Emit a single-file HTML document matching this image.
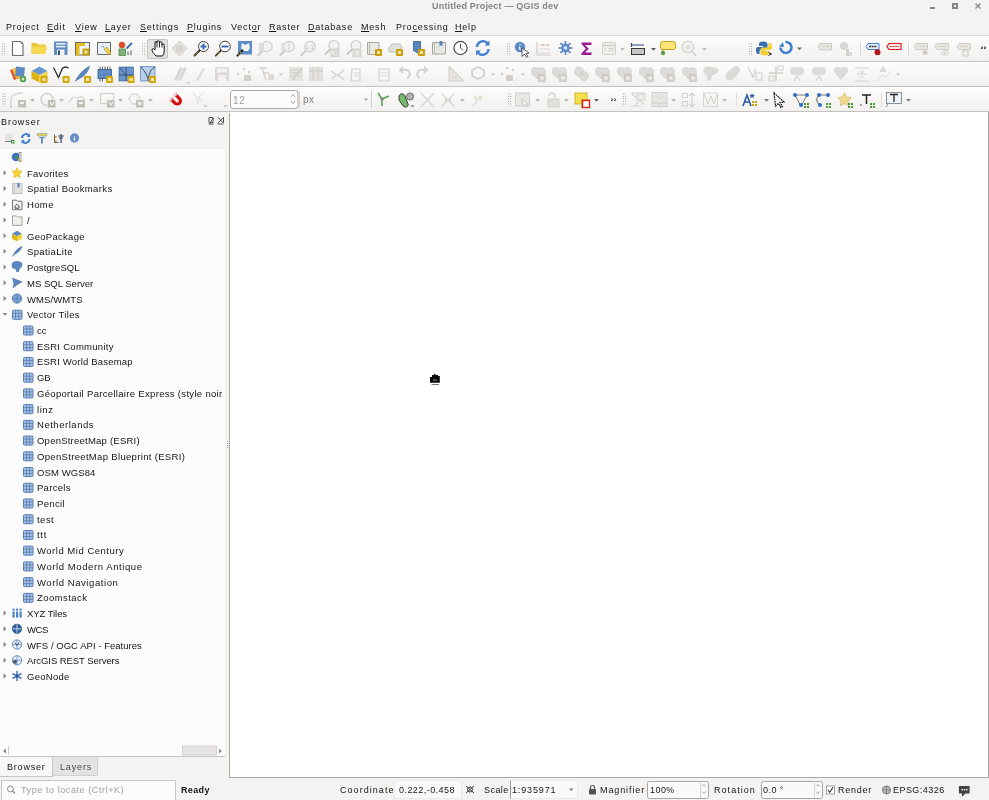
<!DOCTYPE html>
<html><head><meta charset="utf-8">
<style>
*{margin:0;padding:0;box-sizing:border-box}
html,body{width:989px;height:800px;overflow:hidden;background:#f4f3f2;font-family:"Liberation Sans", sans-serif;font-size:9px;letter-spacing:0.45px;color:#151515}
.a{position:absolute;white-space:nowrap}
.t{position:absolute;white-space:nowrap;line-height:12px;will-change:transform}
.u{text-decoration:underline;text-underline-offset:1px}
svg{position:absolute;overflow:visible}
</style></head><body>

<div class="t" style="left:432px;top:0px;font-size:9px;letter-spacing:.2px;font-weight:bold;color:#858585;line-height:13px">Untitled Project — QGIS dev</div>
<div class="a" style="left:930px;top:7px;width:5px;height:2px;background:#858585"></div>
<div class="a" style="left:952px;top:3px;width:6px;height:6px;border:2px solid #858585"></div>
<svg style="left:975px;top:3px" width="6" height="6"><path d="M0.5 0.5L5.5 5.5M5.5 0.5L0.5 5.5" stroke="#858585" stroke-width="1.3"/></svg>
<div class="t" style="left:6.3px;top:21px;letter-spacing:.8px;color:#151515">Pro<span class="u">j</span>ect</div>
<div class="t" style="left:47px;top:21px;letter-spacing:.8px;color:#151515"><span class="u">E</span>dit</div>
<div class="t" style="left:75px;top:21px;letter-spacing:.8px;color:#151515"><span class="u">V</span>iew</div>
<div class="t" style="left:105px;top:21px;letter-spacing:.8px;color:#151515"><span class="u">L</span>ayer</div>
<div class="t" style="left:140px;top:21px;letter-spacing:.8px;color:#151515"><span class="u">S</span>ettings</div>
<div class="t" style="left:187px;top:21px;letter-spacing:.8px;color:#151515"><span class="u">P</span>lugins</div>
<div class="t" style="left:230.5px;top:21px;letter-spacing:.8px;color:#151515">Vect<span class="u">o</span>r</div>
<div class="t" style="left:269px;top:21px;letter-spacing:.8px;color:#151515"><span class="u">R</span>aster</div>
<div class="t" style="left:308px;top:21px;letter-spacing:.8px;color:#151515"><span class="u">D</span>atabase</div>
<div class="t" style="left:361px;top:21px;letter-spacing:.8px;color:#151515"><span class="u">M</span>esh</div>
<div class="t" style="left:396px;top:21px;letter-spacing:.8px;color:#151515">Pro<span class="u">c</span>essing</div>
<div class="t" style="left:455px;top:21px;letter-spacing:.8px;color:#151515"><span class="u">H</span>elp</div>
<div class="a" style="left:0;top:35px;width:989px;height:1px;background:#d9d7d4"></div>
<div class="a" style="left:0;top:36px;width:989px;height:25px;background:linear-gradient(#fdfdfc,#f1f0ef)"></div>
<div class="a" style="left:0;top:61px;width:989px;height:1px;background:#c4c3c1"></div>
<div class="a" style="left:0;top:62px;width:989px;height:24px;background:linear-gradient(#fdfdfc,#f1f0ef)"></div>
<div class="a" style="left:0;top:86px;width:989px;height:1px;background:#c4c3c1"></div>
<div class="a" style="left:0;top:87px;width:989px;height:24px;background:linear-gradient(#fdfdfc,#f1f0ef)"></div>
<div class="a" style="left:0;top:111px;width:989px;height:1px;background:#c4c3c1"></div>
<div class="t" style="left:1px;top:115.5px;letter-spacing:.95px;color:#151515">Browser</div>
<div class="a" style="left:0;top:149px;width:225px;height:607px;background:#fcfcfc"></div>
<div class="t" style="left:26.5px;top:167.73px;font-size:9.5px;letter-spacing:0.267px;color:#151515">Favorites</div>
<div class="t" style="left:26.5px;top:183.45px;font-size:9.5px;letter-spacing:0.371px;color:#151515">Spatial Bookmarks</div>
<div class="t" style="left:26.5px;top:199.18px;font-size:9.5px;letter-spacing:0.357px;color:#151515">Home</div>
<div class="t" style="left:26.5px;top:214.91px;font-size:9.5px;letter-spacing:0.45px;color:#151515">/</div>
<div class="t" style="left:26.5px;top:230.63px;font-size:9.5px;letter-spacing:0.285px;color:#151515">GeoPackage</div>
<div class="t" style="left:26.5px;top:246.36px;font-size:9.5px;letter-spacing:0.369px;color:#151515">SpatiaLite</div>
<div class="t" style="left:26.5px;top:262.09px;font-size:9.5px;letter-spacing:0.092px;color:#151515">PostgreSQL</div>
<div class="t" style="left:26.5px;top:277.82px;font-size:9.5px;letter-spacing:0.01px;color:#151515">MS SQL Server</div>
<div class="t" style="left:26.5px;top:293.54px;font-size:9.5px;letter-spacing:0.094px;color:#151515">WMS/WMTS</div>
<div class="t" style="left:26.5px;top:309.27px;font-size:9.5px;letter-spacing:0.307px;color:#151515">Vector Tiles</div>
<div class="t" style="left:36.5px;top:325.00px;font-size:9.5px;letter-spacing:0.1px;color:#151515">cc</div>
<div class="t" style="left:36.5px;top:340.72px;font-size:9.5px;letter-spacing:0.279px;color:#151515">ESRI Community</div>
<div class="t" style="left:36.5px;top:356.45px;font-size:9.5px;letter-spacing:0.199px;color:#151515">ESRI World Basemap</div>
<div class="t" style="left:36.5px;top:372.18px;font-size:9.5px;letter-spacing:-0.219px;color:#151515">GB</div>
<div class="t" style="left:36.5px;top:387.90px;font-size:9.5px;letter-spacing:0.319px;color:#151515">Géoportail Parcellaire Express (style noir</div>
<div class="t" style="left:36.5px;top:403.63px;font-size:9.5px;letter-spacing:0.55px;color:#151515">linz</div>
<div class="t" style="left:36.5px;top:419.36px;font-size:9.5px;letter-spacing:0.53px;color:#151515">Netherlands</div>
<div class="t" style="left:36.5px;top:435.09px;font-size:9.5px;letter-spacing:0.231px;color:#151515">OpenStreetMap (ESRI)</div>
<div class="t" style="left:36.5px;top:450.81px;font-size:9.5px;letter-spacing:0.327px;color:#151515">OpenStreetMap Blueprint (ESRI)</div>
<div class="t" style="left:36.5px;top:466.54px;font-size:9.5px;letter-spacing:0.096px;color:#151515">OSM WGS84</div>
<div class="t" style="left:36.5px;top:482.27px;font-size:9.5px;letter-spacing:0.288px;color:#151515">Parcels</div>
<div class="t" style="left:36.5px;top:497.99px;font-size:9.5px;letter-spacing:0.338px;color:#151515">Pencil</div>
<div class="t" style="left:36.5px;top:513.72px;font-size:9.5px;letter-spacing:0.484px;color:#151515">test</div>
<div class="t" style="left:36.5px;top:529.45px;font-size:9.5px;letter-spacing:0.697px;color:#151515">ttt</div>
<div class="t" style="left:36.5px;top:545.17px;font-size:9.5px;letter-spacing:0.516px;color:#151515">World Mid Century</div>
<div class="t" style="left:36.5px;top:560.90px;font-size:9.5px;letter-spacing:0.585px;color:#151515">World Modern Antique</div>
<div class="t" style="left:36.5px;top:576.63px;font-size:9.5px;letter-spacing:0.577px;color:#151515">World Navigation</div>
<div class="t" style="left:36.5px;top:592.36px;font-size:9.5px;letter-spacing:0.443px;color:#151515">Zoomstack</div>
<div class="t" style="left:26.5px;top:608.08px;font-size:9.5px;letter-spacing:-0.068px;color:#151515">XYZ Tiles</div>
<div class="t" style="left:26.5px;top:623.81px;font-size:9.5px;letter-spacing:-0.386px;color:#151515">WCS</div>
<div class="t" style="left:26.5px;top:639.54px;font-size:9.5px;letter-spacing:0.037px;color:#151515">WFS / OGC API - Features</div>
<div class="t" style="left:26.5px;top:655.26px;font-size:9.5px;letter-spacing:-0.074px;color:#151515">ArcGIS REST Servers</div>
<div class="t" style="left:26.5px;top:670.99px;font-size:9.5px;letter-spacing:0.276px;color:#151515">GeoNode</div>
<div class="a" style="left:229px;top:112px;width:760px;height:666px;background:#fff;border:1px solid #a9a9a9;border-top:none"></div><div class="a" style="left:229px;top:112px;width:1px;height:1px;background:#f5f4f3"></div>
<div class="a" style="left:0;top:756px;width:225px;height:1px;background:#c8c6c3"></div>
<div class="a" style="left:0;top:757px;width:53px;height:20px;background:#f7f7f6;border-right:1px solid #c8c6c3;border-bottom:1px solid #c8c6c3"></div>
<div class="a" style="left:53px;top:757px;width:45px;height:19px;background:#e4e3e2;border:1px solid #d2d0cd;border-top:none;border-left:none"></div>
<div class="t" style="left:7px;top:760.5px;letter-spacing:.8px;color:#151515">Browser</div>
<div class="t" style="left:60px;top:760.5px;letter-spacing:.85px;color:#4a4a4a">Layers</div>
<div class="a" style="left:1px;top:780px;width:175px;height:21px;background:#fcfcfc;border:1px solid #c9c7c4"></div>
<div class="t" style="left:21px;top:784px;letter-spacing:.58px;color:#a0a0a0">Type to locate (Ctrl+K)</div>
<div class="t" style="left:181px;top:784px;font-weight:bold;font-size:9px;letter-spacing:.35px">Ready</div>
<div class="a" style="left:394px;top:780px;width:68px;height:19px;background:#fafafa;border:1px solid #ebeae8"></div>
<div class="a" style="left:510px;top:780px;width:68px;height:19px;background:#fafafa;border:1px solid #ebeae8;border-left:1px solid #9a9a9a"></div>
<div class="a" style="left:646.5px;top:780.5px;width:62px;height:18px;background:#fafafa;border:1px solid #a8a6a3;border-radius:2.5px"></div>
<div class="a" style="left:699.5px;top:781px;width:1px;height:17px;background:#d6d4d1"></div>
<div class="a" style="left:760.5px;top:780.5px;width:62px;height:18px;background:#fafafa;border:1px solid #a8a6a3;border-radius:2.5px"></div>
<div class="a" style="left:813.5px;top:781px;width:1px;height:17px;background:#d6d4d1"></div>
<div class="t" style="left:340px;top:784px;letter-spacing:1.05px">Coordinate</div>
<div class="t" style="left:399px;top:784px">0.222,-0.458</div>
<div class="t" style="left:484px;top:784px">Scale</div>
<div class="t" style="left:512px;top:784px;letter-spacing:.85px">1:935971</div>
<div class="t" style="left:600px;top:784px;letter-spacing:.9px">Magnifier</div>
<div class="t" style="left:650px;top:784px">100%</div>
<div class="t" style="left:714px;top:784px;letter-spacing:1.05px">Rotation</div>
<div class="t" style="left:763px;top:784px">0.0 °</div>
<div class="t" style="left:838px;top:784px;letter-spacing:.75px">Render</div>
<div class="t" style="left:893px;top:784px">EPSG:4326</div>
<svg style="left:0;top:0" width="989" height="800"><rect x="2" y="43.5" width="1" height="1" fill="#a9a9a9"/><rect x="4" y="43.5" width="1" height="1" fill="#a9a9a9"/><rect x="2" y="46.0" width="1" height="1" fill="#a9a9a9"/><rect x="4" y="46.0" width="1" height="1" fill="#a9a9a9"/><rect x="2" y="48.5" width="1" height="1" fill="#a9a9a9"/><rect x="4" y="48.5" width="1" height="1" fill="#a9a9a9"/><rect x="2" y="51.0" width="1" height="1" fill="#a9a9a9"/><rect x="4" y="51.0" width="1" height="1" fill="#a9a9a9"/><rect x="2" y="53.5" width="1" height="1" fill="#a9a9a9"/><rect x="4" y="53.5" width="1" height="1" fill="#a9a9a9"/><path d="M12.5 41.5h8l2.5 2.5v11.5h-10.5z" fill="#fff" stroke="#6a6a6a" stroke-width="1.1"/><rect x="21" y="42" width="1.2" height="1.2" fill="#555"/><path d="M31.5 43h5l1.5 1.5h7.5v9.5h-14z" fill="#e9c63a"/><path d="M32 46.5h15l-1.5 7.5h-14z" fill="#f7d955"/><rect x="54" y="41.5" width="13.5" height="13.5" rx="1.2" fill="#5f8ac4"/><rect x="56" y="43" width="9.5" height="1.6" fill="#e8eef6"/><rect x="56" y="45.8" width="9.5" height="1.6" fill="#e8eef6"/><rect x="57" y="49.5" width="7.5" height="5.5" fill="#f2f2f2"/><rect x="58" y="50.5" width="2" height="4.5" fill="#2d4d7a"/><rect x="75.5" y="42.5" width="14" height="12.5" fill="#eef5fc" stroke="#6a6a6a" stroke-width="1"/><rect x="76" y="43" width="3.5" height="12.5" fill="#e3bd20"/><rect x="76" y="43" width="9" height="3" fill="#e3bd20"/><rect x="82.5" y="48.5" width="7" height="7" rx="1" fill="#c9a10a"/><rect x="84.5" y="50.5" width="3" height="3" fill="#fff" opacity="0.7"/><rect x="97.5" y="42.5" width="13" height="12" fill="#e6f0fb" stroke="#6a6a6a" stroke-width="1"/><path d="M101 47l2-1 1 2" stroke="#999" stroke-width="0.8" fill="none"/><path d="M104 49l3-2 4 6-2 2z" fill="#f1d04a" stroke="#b8960e" stroke-width="0.6"/><circle cx="122" cy="45" r="3.2" fill="#d9532c"/><path d="M126.5 48.5L132 43" stroke="#3f6fb0" stroke-width="2"/><rect x="119" y="49" width="6.5" height="6.5" fill="#7fb27a" stroke="#4b8a47" stroke-width="0.8"/><path d="M128 51.5v3.5M131 50.5v4.5" stroke="#555" stroke-width="1"/><rect x="142" y="43.5" width="1" height="1" fill="#a9a9a9"/><rect x="144" y="43.5" width="1" height="1" fill="#a9a9a9"/><rect x="142" y="46.0" width="1" height="1" fill="#a9a9a9"/><rect x="144" y="46.0" width="1" height="1" fill="#a9a9a9"/><rect x="142" y="48.5" width="1" height="1" fill="#a9a9a9"/><rect x="144" y="48.5" width="1" height="1" fill="#a9a9a9"/><rect x="142" y="51.0" width="1" height="1" fill="#a9a9a9"/><rect x="144" y="51.0" width="1" height="1" fill="#a9a9a9"/><rect x="142" y="53.5" width="1" height="1" fill="#a9a9a9"/><rect x="144" y="53.5" width="1" height="1" fill="#a9a9a9"/><rect x="147.5" y="39.5" width="20" height="19" rx="1.5" fill="#e3e2e0" stroke="#c4c2bf"/><path d="M156 56L153 52.5Q151 49.5 152.5 48.8Q153.5 48.3 155 50L155 43Q155 41.5 156 41.5Q157 41.5 157 43L157 42Q157 40.8 158.3 40.8Q159.5 40.8 159.5 42L159.5 42.8Q159.5 41.8 160.7 41.8Q162 41.8 162 43L162 45Q162 44 163 44Q164.2 44 164.2 45.3L164.2 51Q164.2 54 162.5 56Z" fill="#fff" stroke="#111" stroke-width="1" stroke-linejoin="round"/><path d="M157 43V47.5M159.5 42.8V47.5M162 45V47.5" stroke="#111" stroke-width="0.9"/><path d="M179.5 41l7.5 7.5-7.5 7.5-7.5-7.5z" fill="#e3e1dd" stroke="#cfccc7" stroke-width="1"/><rect x="176" y="45" width="7" height="7" fill="#d8d5d0"/><path d="M200.0 50.0L194.5 55.5" stroke="#222" stroke-width="1.8" stroke-linecap="round"/><path d="M198.5 51.5L194.5 55.5" stroke="#e8c020" stroke-width="1" stroke-dasharray="1.5 1"/><circle cx="203.5" cy="46.5" r="5" fill="#fff" stroke="#3a3a3a" stroke-width="1.0"/><path d="M200.5 46.5h6M203.5 43.5v6" stroke="#3b6db5" stroke-width="2"/><path d="M221.29 50.21L215.79 55.71" stroke="#222" stroke-width="1.8" stroke-linecap="round"/><path d="M219.79 51.71L215.79 55.71" stroke="#e8c020" stroke-width="1" stroke-dasharray="1.5 1"/><circle cx="225" cy="46.5" r="5.3" fill="#fff" stroke="#3a3a3a" stroke-width="1.0"/><path d="M221.5 46.5h7" stroke="#3b6db5" stroke-width="2"/><rect x="238" y="41" width="14" height="13.5" fill="#5d8dc9"/><path d="M242 43l3 2 4-2 1 5-2 3h-5l-2-3z" fill="#f4f4f4"/><path d="M242.5 50.5L237.5 55.5" stroke="#222" stroke-width="2.2" stroke-linecap="round"/><path d="M241 52L237.5 55.5" stroke="#e8c020" stroke-width="1.1" stroke-dasharray="1.5 1.2"/><path d="M263.36 50.14L258.36 55.14" stroke="#c8c6c2" stroke-width="2" stroke-linecap="round"/><circle cx="267" cy="46.5" r="5.2" fill="#f3f2f0" stroke="#d0cecb" stroke-width="1.2"/><path d="M285.36 50.14L280.36 55.14" stroke="#c8c6c2" stroke-width="2" stroke-linecap="round"/><circle cx="289" cy="46.5" r="5.2" fill="#f3f2f0" stroke="#d0cecb" stroke-width="1.2"/><path d="M306.36 50.14L301.36 55.14" stroke="#c8c6c2" stroke-width="2" stroke-linecap="round"/><circle cx="310" cy="46.5" r="5.2" fill="#f3f2f0" stroke="#d0cecb" stroke-width="1.2"/><rect x="259" y="43" width="5" height="8" fill="#dedcd8"/><rect x="281" y="43" width="4" height="8" fill="#e2e0dc"/><path d="M289 43v7" stroke="#d0cdc8"/><text x="306" y="49" font-size="5" fill="#c0bdb8" font-family="Liberation Sans">1:1</text><path d="M330.5 49.0L325.5 54.0" stroke="#c8c6c2" stroke-width="2" stroke-linecap="round"/><circle cx="334" cy="45.5" r="5" fill="#f3f2f0" stroke="#d0cecb" stroke-width="1.2"/><rect x="331" y="49" width="8" height="7.5" fill="#dedcd8" stroke="#d2cfca" stroke-width="0.8"/><path d="M352.5 49.0L347.5 54.0" stroke="#c8c6c2" stroke-width="2" stroke-linecap="round"/><circle cx="356" cy="45.5" r="5" fill="#f3f2f0" stroke="#d0cecb" stroke-width="1.2"/><rect x="353" y="49" width="8" height="7.5" fill="#dedcd8" stroke="#d2cfca" stroke-width="0.8"/><path d="M334 51l-2 1.8 2 1.8" stroke="#fff" fill="none"/><path d="M356 51l2 1.8-2 1.8" stroke="#fff" fill="none"/><path d="M367.5 42.5h11.5v12h-11.5z" fill="#e9e8e5" stroke="#a9a7a3" stroke-width="1"/><path d="M369.5 42.5v12" stroke="#bdbab5"/><rect x="375" y="49" width="7" height="7" rx="1" fill="#c9a10a"/><rect x="377" y="51" width="3" height="3" fill="#fff" opacity="0.7"/><path d="M388 49l4-5h8l2 3-3 5h-9z" fill="#e2e0dc" stroke="#b5b2ad" stroke-width="0.8"/><rect x="396" y="49" width="7" height="7" rx="1" fill="#c9a10a"/><rect x="398" y="51" width="3" height="3" fill="#fff" opacity="0.7"/><path d="M413.5 41.5h7v14l-3.5-3-3.5-2z" fill="#5a86c0" stroke="#2f5a92" stroke-width="0.8"/><rect x="418" y="49" width="7" height="7" rx="1" fill="#c9a10a"/><rect x="420" y="51" width="3" height="3" fill="#fff" opacity="0.7"/><path d="M432.5 42.5h13v11.5h-13z" fill="#e8e7e4" stroke="#a6a39e" stroke-width="1"/><path d="M434.5 42.5v11.5" stroke="#bbb"/><path d="M439.5 41v5.5l1.5-1.2 1.5 1.2v-5.5z" fill="#5a86c0"/><circle cx="460.5" cy="48" r="6.6" fill="#fdfdfd" stroke="#505050" stroke-width="1.2"/><path d="M460.5 43.5v4.5l2.5 2.5" stroke="#505050" stroke-width="1" fill="none"/><path d="M477 47a6 6 0 0 1 10.5-3.8" stroke="#3f7fd0" stroke-width="2.4" fill="none"/><path d="M489.5 40.5v5h-5z" fill="#3f7fd0"/><path d="M488.5 49a6 6 0 0 1-10.5 3.8" stroke="#3f7fd0" stroke-width="2.4" fill="none"/><path d="M476 55.5v-5h5z" fill="#3f7fd0"/><rect x="507" y="43.5" width="1" height="1" fill="#a9a9a9"/><rect x="509" y="43.5" width="1" height="1" fill="#a9a9a9"/><rect x="507" y="46.0" width="1" height="1" fill="#a9a9a9"/><rect x="509" y="46.0" width="1" height="1" fill="#a9a9a9"/><rect x="507" y="48.5" width="1" height="1" fill="#a9a9a9"/><rect x="509" y="48.5" width="1" height="1" fill="#a9a9a9"/><rect x="507" y="51.0" width="1" height="1" fill="#a9a9a9"/><rect x="509" y="51.0" width="1" height="1" fill="#a9a9a9"/><rect x="507" y="53.5" width="1" height="1" fill="#a9a9a9"/><rect x="509" y="53.5" width="1" height="1" fill="#a9a9a9"/><circle cx="520" cy="47" r="5.2" fill="#5b8ac7"/><path d="M520 44v1M519.5 46.5l.5 3.5" stroke="#fff" stroke-width="1.4"/><path d="M522 48l7 5-3 .5 2 3-1.5.8-2-3-2.5 2z" fill="#fff" stroke="#333" stroke-width="0.8"/><path d="M537 42v13h14" stroke="#d0cec9" stroke-width="1.2" fill="none"/><path d="M539 45h11" stroke="#d6d3ce" stroke-width="1"/><path d="M539 49h11" stroke="#d6d3ce" stroke-width="1"/><path d="M539 53h11" stroke="#d6d3ce" stroke-width="1"/><circle cx="543" cy="45" r="1" fill="#e0b0a0"/><circle cx="548" cy="45" r="1" fill="#e0b0a0"/><g stroke="#4d7fc4" stroke-width="1.6"><path d="M565.5 41v14M558.5 48h14M560.5 43l10 10M570.5 43l-10 10"/></g><circle cx="565.5" cy="48" r="3.8" fill="#6c97d2" stroke="#4d7fc4"/><circle cx="565.5" cy="48" r="1.4" fill="#fff"/><path d="M581.5 42.5h10v2.5h-6.5l3.8 3.8-3.8 3.6h6.5v2.5h-10v-1.6l4.3-4.5-4.3-4.7z" fill="#9b1c96"/><rect x="602.5" y="42.5" width="13" height="12" rx="1" fill="#f0efec" stroke="#d2d0cb"/><path d="M602.5 45.5h13" stroke="#d2d0cb" stroke-width="1.5"/><path d="M604 48.5h2M608 48.5h6" stroke="#d7d4cf"/><path d="M604 51h2M608 51h6" stroke="#d7d4cf"/><path d="M620 48h5l-2.5 2.75z" fill="#c0beba"/><path d="M631 45h13M631.5 43v4" stroke="#2a4a78" stroke-width="1.2"/><rect x="631.5" y="48.5" width="13" height="6" fill="#c6c6c6" stroke="#3a3a3a" stroke-width="1"/><path d="M651 48h5l-2.5 2.75z" fill="#5a5a5a"/><rect x="660.5" y="41.5" width="15" height="8" rx="2.5" fill="#fbe57a" stroke="#c9a211" stroke-width="1"/><path d="M662 49l1 2" stroke="#c9a211"/><circle cx="663" cy="53" r="2.2" fill="#5d9d45"/><circle cx="688" cy="47" r="5.5" fill="none" stroke="#d3d0cb" stroke-width="2" stroke-dasharray="2 1"/><circle cx="688" cy="47" r="2.5" fill="#e2e0dc"/><path d="M692 51l4 5" stroke="#d3d0cb" stroke-width="1.5"/><path d="M702 48h5l-2.5 2.75z" fill="#c0beba"/><rect x="749" y="43.5" width="1" height="1" fill="#a9a9a9"/><rect x="751" y="43.5" width="1" height="1" fill="#a9a9a9"/><rect x="749" y="46.0" width="1" height="1" fill="#a9a9a9"/><rect x="751" y="46.0" width="1" height="1" fill="#a9a9a9"/><rect x="749" y="48.5" width="1" height="1" fill="#a9a9a9"/><rect x="751" y="48.5" width="1" height="1" fill="#a9a9a9"/><rect x="749" y="51.0" width="1" height="1" fill="#a9a9a9"/><rect x="751" y="51.0" width="1" height="1" fill="#a9a9a9"/><rect x="749" y="53.5" width="1" height="1" fill="#a9a9a9"/><rect x="751" y="53.5" width="1" height="1" fill="#a9a9a9"/><g transform="translate(1.5 0)"><path d="M763 42c-4 0-5.5 1-5.5 3v3h5.5v1h-6c-1 0-2 1-2 3.5" fill="none"/><path d="M761.5 41.5c-3 0-4 1-4 2.5v2h4v1h-5c-1.5 0-2 1.5-2 3.5s.8 3.5 2 3.5h1.5v-2.5c0-1.2 1-2 2-2h4c1 0 2-.8 2-2v-3.5c0-1.5-1.5-2.5-4.5-2.5z" fill="#3a6fb0"/><path d="M763.5 55.5c3 0 4-1 4-2.5v-2h-4v-1h5c1.5 0 2-1.5 2-3.5s-.8-3.5-2-3.5h-1.5v2.5c0 1.2-1 2-2 2h-4c-1 0-2 .8-2 2v3.5c0 1.5 1.5 2.5 4.5 2.5z" fill="#f5cf3a"/><path d="M767 52.5l3 1.5-3 1.5" stroke="#222" stroke-width="1" fill="none"/></g><path d="M780.5 47.5a5.5 5.5 0 1 0 5-5.5" stroke="#3f7fd0" stroke-width="2.6" fill="none"/><path d="M779 46.5l4-4.5 1 5z" fill="#3f7fd0"/><path d="M797 47.5h5l-2.5 2.75z" fill="#6a6a6a"/><path d="M820 43.5h11.5v6.5h-11.5l-2-3.2z" fill="#e9e7e3" stroke="#cfccc6" stroke-width="1"/><path d="M822 46.5h8" stroke="#d9d4c0" stroke-width="1.5"/><circle cx="844" cy="46" r="4" fill="#d9d7d3"/><rect x="846" y="49" width="3" height="7" fill="#d2d0cb"/><rect x="849" y="52" width="3" height="4" fill="#dcdad5"/><rect x="860" y="43" width="1" height="12" fill="#d6d4d0"/><path d="M868 43.5h11v6h-11l-2-3z" fill="#e8f0fb" stroke="#3f7fd0" stroke-width="1"/><path d="M869 46.5h8" stroke="#333" stroke-width="1.5" stroke-dasharray="2 .6"/><circle cx="877.5" cy="52.2" r="3" fill="#b3171d"/><path d="M889 43.5h12v6h-12l-2-3z" fill="#fbeaea" stroke="#e0191e" stroke-width="1.2"/><path d="M890 46.5h9" stroke="#d33" stroke-width="1.2" stroke-dasharray="2 .6"/><rect x="908" y="43" width="1" height="12" fill="#d6d4d0"/><path d="M916 43.5h11.5v6h-11.5l-2-3z" fill="#e9e7e3" stroke="#cfccc6" stroke-width="1"/><path d="M917 46.5h8" stroke="#dbd6c0" stroke-width="1.3"/><path d="M937 43.5h11.5v6h-11.5l-2-3z" fill="#e9e7e3" stroke="#cfccc6" stroke-width="1"/><path d="M938 46.5h8" stroke="#dbd6c0" stroke-width="1.3"/><path d="M959 43.5h11.5v6h-11.5l-2-3z" fill="#e9e7e3" stroke="#cfccc6" stroke-width="1"/><path d="M960 46.5h8" stroke="#dbd6c0" stroke-width="1.3"/><circle cx="925" cy="52.5" r="2.5" fill="#d0cdc8"/><ellipse cx="945" cy="53" rx="3.5" ry="2.2" fill="none" stroke="#d0cdc8"/><circle cx="945" cy="53" r="1" fill="#cfccc7"/><path d="M963 51h5v5h-5z" fill="none" stroke="#d0cdc8" stroke-width="1.2"/><path d="M981 46.8l2 1-2 1M984 46.8l2 1-2 1" stroke="#333" stroke-width="1" fill="none"/><path d="M10 70l6-2 4 10-6 2z" fill="#e24b2b"/><path d="M12 69l6-2 4 10-6 2z" fill="#f2c230"/><path d="M16 66.5l9 1-1 9.5-9-1z" fill="#5f8ac4"/><circle cx="23" cy="79" r="3.2" fill="#4ea04a"/><path d="M23 77.5v3M21.5 79h3" stroke="#fff" stroke-width="1"/><path d="M31.5 71l8-4.5 8 4.5-8 4z" fill="#6b97cf"/><path d="M31.5 71v7.5l8 4v-7.5z" fill="#e0b413"/><path d="M39.5 75.5v7l8-4v-7.5z" fill="#f3d34a"/><rect x="40.5" y="76" width="7" height="7" rx="1" fill="#d3a90e"/><rect x="42.5" y="78" width="3" height="3" fill="#fff" opacity="0.7"/><path d="M53.5 67.5l5 10 4-9.5 3-1 3 .8" stroke="#222" stroke-width="1.2" fill="none"/><rect x="62.5" y="76" width="7" height="7" rx="1" fill="#d3a90e"/><rect x="64.5" y="78" width="3" height="3" fill="#fff" opacity="0.7"/><path d="M75.5 81c3-6 8-12 14-14.5-1 4-4 9-10 12z" fill="#5b88c2" stroke="#3b6197" stroke-width="0.6"/><rect x="84" y="76" width="7" height="7" rx="1" fill="#d3a90e"/><rect x="86" y="78" width="3" height="3" fill="#fff" opacity="0.7"/><rect x="98" y="69.5" width="13.5" height="9" fill="#5f8ac4" stroke="#2f5a92" stroke-width="0.8"/><path d="M100 66.5v3M102.5 66.5v3M105 66.5v3M107.5 66.5v3M110 66.5v3M100 78.5v3M102.5 78.5v3" stroke="#333" stroke-width="0.8"/><rect x="106" y="76" width="7" height="7" rx="1" fill="#d3a90e"/><rect x="108" y="78" width="3" height="3" fill="#fff" opacity="0.7"/><rect x="119" y="67" width="14.5" height="14" fill="#6a95cc" stroke="#2f5a92" stroke-width="0.6"/><path d="M126 67v14M119 75h14M120 68l6 7" stroke="#234" stroke-width="0.7"/><rect x="127.5" y="76" width="7" height="7" rx="1" fill="#d3a90e"/><rect x="129.5" y="78" width="3" height="3" fill="#fff" opacity="0.7"/><rect x="140.5" y="66.5" width="14.5" height="14.5" fill="#b9cfe9" stroke="#5f8ac4" stroke-width="0.8"/><path d="M141 67l4 5 3 6 3-8 4-3M148 78v3" stroke="#234" stroke-width="0.8" fill="none"/><rect x="149" y="76" width="7" height="7" rx="1" fill="#d3a90e"/><rect x="151" y="78" width="3" height="3" fill="#fff" opacity="0.7"/><path d="M174 80l6-13 3 1-6 13zM178 80l6-13 3 1-6 13z" fill="#d9d7d3"/><path d="M187 83h3" stroke="#c0beba"/><path d="M196 80l7-12 2 1-7 12z" fill="#dcdad6"/><rect x="215" y="67" width="14" height="14" rx="1" fill="#dcdad6"/><rect x="217" y="68.5" width="10" height="4" fill="#f3f2f0"/><rect x="218" y="75" width="8" height="6" fill="#f3f2f0"/><g fill="#d3d0cb"><circle cx="238" cy="74" r="1.2"/><circle cx="244" cy="69" r="1.2"/><circle cx="249" cy="72" r="1.2"/><rect x="244" y="75" width="7" height="6"/></g><path d="M259 68h8M262 68l4 12M263 73h6" stroke="#d3d0cb" stroke-width="1.4"/><rect x="268" y="74" width="6" height="6" fill="#dedbd6"/><path d="M279 73.5h4l-2.0 2.2z" fill="#c3c1bd"/><rect x="289" y="67" width="14" height="14" fill="#e6e4e0"/><path d="M290 70h12M290 73h12M290 76h12" stroke="#d0ccc0"/><path d="M293 80l9-12" stroke="#cfcbc5" stroke-width="1.3"/><rect x="309" y="67" width="14" height="14" fill="#e3e1dd"/><path d="M309 71h14M313 67v14M318 67v14" stroke="#cfccc7"/><path d="M331 71l6 4-6 4M344 70l-6 5 6 5" stroke="#d2cfca" stroke-width="1.2" fill="none"/><path d="M352 69h8v12h-9z" fill="none" stroke="#d2cfca" stroke-width="1.2"/><path d="M354 73h5M354 76h5" stroke="#d6d3ce"/><path d="M379 69h10v12h-10z" fill="none" stroke="#d2cfca" stroke-width="1.2"/><path d="M381 73h6M381 76h6" stroke="#d6d3ce"/><path d="M407 78a4 4 0 1 0-3-8h-3M403 67l-3 3 3 3" stroke="#d3d0cb" stroke-width="1.8" fill="none"/><path d="M420 78a4 4 0 1 1 3-8h3M424 67l3 3-3 3" stroke="#d3d0cb" stroke-width="1.8" fill="none"/><path d="M449 66v15h15z" fill="#e6e4e0" stroke="#cfccc7" stroke-width="1"/><path d="M452 77h5" stroke="#e0c0b8"/><path d="M478 67l6 3v6l-6 3-6-3v-6z" fill="none" stroke="#d6d3ce" stroke-width="1.8"/><path d="M491 73.5h4l-2.0 2.2z" fill="#c3c1bd"/><g fill="#d3d0cb"><circle cx="502" cy="74" r="1.3"/><circle cx="507" cy="68" r="1.3"/><circle cx="513" cy="70" r="1.3"/><rect x="506" y="75" width="7" height="6"/></g><path d="M521 73.5h4l-2.0 2.2z" fill="#c3c1bd"/><path d="M531.5 70.5c0-3 3-3.5 5.5-2.5s5.5-1.5 7.5 1 .5 5-1.5 6.5l-1 3h-5.5l-1-2.5c-2.5 0-4-1.5-4-5.5z" fill="#dddbd7" stroke="#cfccc7" stroke-width="0.7"/><rect x="538.5" y="74.5" width="7" height="7" fill="#d3d0ca" stroke="#c4c1bb" stroke-width="0.6"/><rect x="540.5" y="76.5" width="3" height="3" fill="#f2f1ef"/><path d="M552.5 70.5c0-3 3-3.5 5.5-2.5s5.5-1.5 7.5 1 .5 5-1.5 6.5l-1 3h-5.5l-1-2.5c-2.5 0-4-1.5-4-5.5z" fill="#dddbd7" stroke="#cfccc7" stroke-width="0.7"/><rect x="559.5" y="74.5" width="7" height="7" fill="#d3d0ca" stroke="#c4c1bb" stroke-width="0.6"/><rect x="561.5" y="76.5" width="3" height="3" fill="#f2f1ef"/><path d="M595.5 70.5c0-3 3-3.5 5.5-2.5s5.5-1.5 7.5 1 .5 5-1.5 6.5l-1 3h-5.5l-1-2.5c-2.5 0-4-1.5-4-5.5z" fill="#dddbd7" stroke="#cfccc7" stroke-width="0.7"/><rect x="602.5" y="74.5" width="7" height="7" fill="#d3d0ca" stroke="#c4c1bb" stroke-width="0.6"/><rect x="604.5" y="76.5" width="3" height="3" fill="#f2f1ef"/><path d="M617.5 70.5c0-3 3-3.5 5.5-2.5s5.5-1.5 7.5 1 .5 5-1.5 6.5l-1 3h-5.5l-1-2.5c-2.5 0-4-1.5-4-5.5z" fill="#dddbd7" stroke="#cfccc7" stroke-width="0.7"/><rect x="624.5" y="74.5" width="7" height="7" fill="#d3d0ca" stroke="#c4c1bb" stroke-width="0.6"/><rect x="626.5" y="76.5" width="3" height="3" fill="#f2f1ef"/><path d="M639.5 70.5c0-3 3-3.5 5.5-2.5s5.5-1.5 7.5 1 .5 5-1.5 6.5l-1 3h-5.5l-1-2.5c-2.5 0-4-1.5-4-5.5z" fill="#dddbd7" stroke="#cfccc7" stroke-width="0.7"/><rect x="646.5" y="74.5" width="7" height="7" fill="#d3d0ca" stroke="#c4c1bb" stroke-width="0.6"/><rect x="648.5" y="76.5" width="3" height="3" fill="#f2f1ef"/><path d="M660.5 70.5c0-3 3-3.5 5.5-2.5s5.5-1.5 7.5 1 .5 5-1.5 6.5l-1 3h-5.5l-1-2.5c-2.5 0-4-1.5-4-5.5z" fill="#dddbd7" stroke="#cfccc7" stroke-width="0.7"/><rect x="667.5" y="74.5" width="7" height="7" fill="#d3d0ca" stroke="#c4c1bb" stroke-width="0.6"/><rect x="669.5" y="76.5" width="3" height="3" fill="#f2f1ef"/><path d="M682.5 70.5c0-3 3-3.5 5.5-2.5s5.5-1.5 7.5 1 .5 5-1.5 6.5l-1 3h-5.5l-1-2.5c-2.5 0-4-1.5-4-5.5z" fill="#dddbd7" stroke="#cfccc7" stroke-width="0.7"/><rect x="689.5" y="74.5" width="7" height="7" fill="#d3d0ca" stroke="#c4c1bb" stroke-width="0.6"/><rect x="691.5" y="76.5" width="3" height="3" fill="#f2f1ef"/><circle cx="579" cy="71.5" r="4.5" fill="#dddbd7" stroke="#cfccc7" stroke-width="0.7"/><circle cx="584" cy="76" r="4.5" fill="#dddbd7" stroke="#cfccc7" stroke-width="0.7"/><path d="M580 73l3 2" stroke="#c8c5c0"/><path d="M704 70c0-3 4-3.5 7-2.5s6 0 6.5 2.5-2.5 4.5-5.5 4.5l-2 5.5c-1.5 1-3-.5-2.5-2l.5-3c-3 0-4-2-4-5z" fill="#dddbd7" stroke="#cfccc7" stroke-width="0.7"/><path d="M727 79c-2-2-1-5 2-8l5-3.5c3-2 6 0 5.5 3l-3 5c-3 3-7 5.5-9.5 3.5z" fill="#dddbd7" stroke="#cfccc7" stroke-width="0.7"/><path d="M748 67l5 10 3-8" stroke="#d6d3ce" stroke-width="1.3" fill="none"/><rect x="756" y="73" width="6" height="7" fill="none" stroke="#d0cdc8"/><path d="M776 66v15M769 73h14" stroke="#d3d0cb" stroke-width="1.5"/><rect x="778" y="66" width="5" height="4" fill="none" stroke="#d3d0cb"/><rect x="769" y="76" width="5" height="5" fill="none" stroke="#d3d0cb"/><circle cx="794" cy="71" r="4" fill="#dcdad6"/><circle cx="800" cy="71" r="4" fill="#dcdad6"/><path d="M794 81l3-6 3 6" stroke="#cfccc7" fill="none"/><circle cx="816" cy="71" r="4" fill="#dcdad6"/><circle cx="822" cy="71" r="4" fill="#dcdad6"/><path d="M816 81l3-6 3 6" stroke="#cfccc7" fill="none"/><path d="M834 70c0-4 6-4 7-1 1-3 7-3 7 1s-4 6-7 10c-3-4-7-6-7-10z" fill="#dcdad6"/><path d="M855 68h14M855 81h14M857 74h10M860 71l2 2 2-2M860 78l2-2 2 2" stroke="#d3d0cb" stroke-width="1" fill="none"/><path d="M877 81l6-6 3 2 5-6" stroke="#d6d3ce" fill="none"/><path d="M883 66l4 6h-8z" fill="#dcdad6"/><path d="M896 73.5h4l-2.0 2.2z" fill="#c3c1bd"/><rect x="2.5" y="93.5" width="1" height="1" fill="#a9a9a9"/><rect x="4.5" y="93.5" width="1" height="1" fill="#a9a9a9"/><rect x="2.5" y="96.0" width="1" height="1" fill="#a9a9a9"/><rect x="4.5" y="96.0" width="1" height="1" fill="#a9a9a9"/><rect x="2.5" y="98.5" width="1" height="1" fill="#a9a9a9"/><rect x="4.5" y="98.5" width="1" height="1" fill="#a9a9a9"/><rect x="2.5" y="101.0" width="1" height="1" fill="#a9a9a9"/><rect x="4.5" y="101.0" width="1" height="1" fill="#a9a9a9"/><rect x="2.5" y="103.5" width="1" height="1" fill="#a9a9a9"/><rect x="4.5" y="103.5" width="1" height="1" fill="#a9a9a9"/><path d="M11 107v-8c0-3 4-6 12-6" stroke="#dad8d4" stroke-width="1.4" fill="none"/><circle cx="11" cy="107" r="1.2" fill="#d3d0cb"/><rect x="18" y="100" width="8" height="7.5" fill="#c3bfb8"/><rect x="20" y="102" width="4" height="2" fill="#f1f0ee"/><path d="M30 99h5l-2.5 2.75z" fill="#b9b6b1"/><circle cx="47" cy="99.5" r="6" fill="none" stroke="#d9d7d3" stroke-width="1.8"/><rect x="48" y="100" width="7.5" height="7.5" fill="#c3bfb8"/><path d="M50 102l2 3 2-3" stroke="#fff" fill="none"/><path d="M59 99h5l-2.5 2.75z" fill="#b9b6b1"/><path d="M70 102c0-4 5-6 8-4 3-3 7 0 6 4" stroke="#dad8d4" stroke-width="1.4" fill="none"/><rect x="77" y="100" width="8" height="7.5" fill="#c3bfb8"/><rect x="79" y="102" width="4" height="2" fill="#f1f0ee"/><path d="M89 99h5l-2.5 2.75z" fill="#b9b6b1"/><rect x="100.5" y="93.5" width="13" height="10" fill="none" stroke="#d6d3cf" stroke-width="1.3"/><rect x="107" y="100" width="7.5" height="7.5" fill="#c3bfb8"/><path d="M109 102l2 3 2-3" stroke="#fff" fill="none"/><path d="M118 99h5l-2.5 2.75z" fill="#b9b6b1"/><path d="M129 99l3-5h5l3 5-3 5h-5z" fill="none" stroke="#d9d7d3" stroke-width="1.4"/><rect x="136" y="100" width="7.5" height="7.5" fill="#c3bfb8"/><rect x="138" y="102" width="3.5" height="3" fill="#f1f0ee"/><path d="M148 99h5l-2.5 2.75z" fill="#b9b6b1"/><g transform="translate(177.2 100.8) rotate(-45)"><path d="M-3.2 -5.5V0a3.2 3.2 0 0 0 6.4 0V-5.5" stroke="#d40f14" stroke-width="3.2" fill="none"/><rect x="-4.8" y="-6" width="3.2" height="1.8" fill="#fff" stroke="#d40f14" stroke-width="0.5"/><rect x="1.6" y="-6" width="3.2" height="1.8" fill="#fff" stroke="#d40f14" stroke-width="0.5"/></g><path d="M193 93l5 6v6M203 93l-5 6M198 99l5 2" stroke="#e2e0dc" stroke-width="1.8" fill="none" stroke-dasharray="1.5 .7"/><path d="M204 106h3M224 106h3" stroke="#a9a6a1" stroke-width="0.9"/><rect x="230.5" y="90.5" width="67.5" height="18" rx="2.5" fill="#fbfbfb" stroke="#acaaa7" stroke-width="1"/><path d="M291 97l2-2.5 2 2.5M291 101l2 2.5 2-2.5" stroke="#9a9a9a" stroke-width="0.9" fill="none"/><path d="M299.5 91v17M371.5 91v17" stroke="#d3d1cd" stroke-width="1"/><path d="M364 98.5h4l-2.0 2.2z" fill="#a0a0a0"/><path d="M382 106v-7M382 99l-4-6M382 99l7-3" stroke="#5aa552" stroke-width="1.6" fill="none"/><circle cx="382" cy="99" r="1.8" fill="#8a8a8a"/><path d="M399 96c1-3 5-3 6 0l3 8c1 3-3 4-5 2l-4-6z" fill="#76b56d" stroke="#333" stroke-width="0.9"/><circle cx="410" cy="96.5" r="3.6" fill="#b3b3b3" stroke="#444" stroke-width="0.7"/><path d="M411 106h3" stroke="#555" stroke-width="1"/><path d="M421 93l13 14M434 93l-13 14" stroke="#dad8d4" stroke-width="1.5"/><path d="M442 94l6 6 6-6M442 106l6-6 6 6" stroke="#d9d6d1" stroke-width="1.5" fill="none"/><path d="M445 98l3 2 3-2v4l-3-2-3 2z" fill="#d8d5cf"/><path d="M460 99h5l-2.5 2.75z" fill="#b9b6b1"/><path d="M472 106l5-4-2-5 5 3 3-5" stroke="#dedcd8" stroke-width="1.4" fill="none"/><circle cx="480" cy="97" r="1" fill="#e7d98c"/><rect x="508" y="93.5" width="1" height="1" fill="#a9a9a9"/><rect x="510" y="93.5" width="1" height="1" fill="#a9a9a9"/><rect x="508" y="96.0" width="1" height="1" fill="#a9a9a9"/><rect x="510" y="96.0" width="1" height="1" fill="#a9a9a9"/><rect x="508" y="98.5" width="1" height="1" fill="#a9a9a9"/><rect x="510" y="98.5" width="1" height="1" fill="#a9a9a9"/><rect x="508" y="101.0" width="1" height="1" fill="#a9a9a9"/><rect x="510" y="101.0" width="1" height="1" fill="#a9a9a9"/><rect x="508" y="103.5" width="1" height="1" fill="#a9a9a9"/><rect x="510" y="103.5" width="1" height="1" fill="#a9a9a9"/><rect x="515.5" y="93" width="14" height="13" fill="#e9e7e3" stroke="#d2cfca"/><path d="M522 99l6 5-2 .5 1.5 2-1 .5-1.5-2-2 1.5z" fill="#f4f3f1" stroke="#c9c6c1" stroke-width="0.8"/><path d="M535 99h5l-2.5 2.75z" fill="#b9b6b1"/><path d="M549 96a3 3 0 1 1 6 0v2" stroke="#d5d2cd" stroke-width="1.3" fill="none"/><rect x="548" y="99" width="11" height="8" fill="#e3e0db" stroke="#d0cdc8" stroke-width="0.8"/><path d="M564 99h5l-2.5 2.75z" fill="#b9b6b1"/><rect x="575" y="93" width="12" height="11" fill="#f4e04f" stroke="#c7a812" stroke-width="0.8"/><rect x="581.5" y="99.5" width="8" height="8" fill="#f4e04f" stroke="#c7a812" stroke-width="0.8"/><rect x="582.5" y="100.5" width="7" height="7" fill="#fff" stroke="#dd2020" stroke-width="1.4"/><path d="M594 99h5l-2.5 2.75z" fill="#606060"/><path d="M611 98.5l2 1.2-2 1.2M614 98.5l2 1.2-2 1.2" stroke="#333" stroke-width="0.9" fill="none"/><rect x="623" y="93.5" width="1" height="1" fill="#a9a9a9"/><rect x="625" y="93.5" width="1" height="1" fill="#a9a9a9"/><rect x="623" y="96.0" width="1" height="1" fill="#a9a9a9"/><rect x="625" y="96.0" width="1" height="1" fill="#a9a9a9"/><rect x="623" y="98.5" width="1" height="1" fill="#a9a9a9"/><rect x="625" y="98.5" width="1" height="1" fill="#a9a9a9"/><rect x="623" y="101.0" width="1" height="1" fill="#a9a9a9"/><rect x="625" y="101.0" width="1" height="1" fill="#a9a9a9"/><rect x="623" y="103.5" width="1" height="1" fill="#a9a9a9"/><rect x="625" y="103.5" width="1" height="1" fill="#a9a9a9"/><path d="M631 93h14M631 106h10M632 94l12 10M644 94l-9 12" stroke="#d6d3ce" stroke-width="1.2" fill="none"/><rect x="637" y="94" width="8" height="6" fill="#ecebe8" stroke="#d6d3ce"/><rect x="652" y="92.5" width="15" height="14" fill="#e8e6e2" stroke="#d3d0cb"/><path d="M652 103h15M659 103v4" stroke="#cfccc7"/><path d="M656 96l4 3 4-3" stroke="#d8d5cf" fill="none"/><path d="M671 99h5l-2.5 2.75z" fill="#b9b6b1"/><rect x="682.5" y="93.5" width="5" height="4" fill="none" stroke="#d3d0cb"/><rect x="682.5" y="101.5" width="5" height="4.5" fill="none" stroke="#d3d0cb"/><path d="M692 93v14M689 96l3-3 3 3M689 104l3 3 3-3" stroke="#d3d0cb" stroke-width="1.2" fill="none"/><rect x="703.5" y="93" width="14" height="13.5" fill="none" stroke="#d9d6d1"/><path d="M704 94l4 10 3-8 3 8 3-10" stroke="#d3d0cb" fill="none"/><path d="M722 99h5l-2.5 2.75z" fill="#b9b6b1"/><rect x="736" y="93" width="1" height="13" fill="#dedcd8"/><path d="M743 106l4-11 4 11M745 102h5" stroke="#2c5aa0" stroke-width="1.6" fill="none"/><path d="M752 93l1 2h2l-1.5 1.3.6 2-2-1.2-2 1.2.6-2-1.5-1.3h2z" fill="#2c5aa0"/><g fill="#c9a10a"><rect x="752" y="101" width="2" height="2"/><rect x="755" y="101" width="2" height="2"/><rect x="752" y="104" width="2" height="2"/><rect x="755" y="104" width="2" height="2"/></g><path d="M764 99h5l-2.5 2.75z" fill="#7a7a7a"/><path d="M774 93l10 9-4 .5 2.5 4-1.5 1-2.5-4-3 2.5z" fill="#f4f4f4" stroke="#111" stroke-width="1.2" stroke-dasharray="1.6 .8"/><path d="M795 95h12l-6 11z" fill="none" stroke="#5a5a5a" stroke-width="0.8"/><g fill="#2f6ec6"><circle cx="795" cy="95" r="2"/><circle cx="807" cy="95" r="2"/><circle cx="801" cy="105" r="2"/></g><g fill="#4a9a3a"><rect x="804" y="103" width="2" height="2"/><rect x="807" y="103" width="2" height="2"/><rect x="804" y="106" width="2" height="2"/><rect x="807" y="106" width="2" height="2"/></g><path d="M819 95c-3 3-3 7 1 10" stroke="#333" stroke-width="0.8" fill="none"/><path d="M819 95h9" stroke="#555" stroke-width="0.8"/><g fill="#2f6ec6"><circle cx="819" cy="95" r="2"/><circle cx="828" cy="95" r="2"/><circle cx="820" cy="105" r="2"/></g><g fill="#4a9a3a"><rect x="826" y="103" width="2" height="2"/><rect x="829" y="103" width="2" height="2"/><rect x="826" y="106" width="2" height="2"/><rect x="829" y="106" width="2" height="2"/></g><path d="M844.5 92.5l2.2 4.5 4.8.7-3.5 3.4.8 4.8-4.3-2.3-4.3 2.3.8-4.8-3.5-3.4 4.8-.7z" fill="#eed88a" stroke="#c9b070" stroke-width="0.6"/><g fill="#4a9a3a"><rect x="848" y="103" width="2" height="2"/><rect x="851" y="103" width="2" height="2"/><rect x="848" y="106" width="2" height="2"/><rect x="851" y="106" width="2" height="2"/></g><path d="M862 95h9M866.5 95v9" stroke="#222" stroke-width="1.5"/><path d="M860 105h2" stroke="#555"/><g fill="#4a9a3a"><rect x="870" y="103" width="2" height="2"/><rect x="873" y="103" width="2" height="2"/><rect x="870" y="106" width="2" height="2"/><rect x="873" y="106" width="2" height="2"/></g><rect x="881" y="93" width="1" height="13" fill="#dedcd8"/><rect x="886.5" y="92.5" width="15" height="11" fill="#eef2f6" stroke="#6a7a8a" stroke-width="0.8"/><path d="M890 94.5h8M894 94.5v7.5" stroke="#222" stroke-width="1.3"/><path d="M886 107l2-3" stroke="#888"/><path d="M906 99h5l-2.5 2.75z" fill="#7a7a7a"/><path d="M209 117.5h4v5h-4zM210 122.5l3.5-4.5" stroke="#444" stroke-width="0.9" fill="none"/><path d="M208.5 124h5" stroke="#444"/><path d="M218 117.5l5.5 5.5M223.5 117.5l-5.5 5.5M217.5 124h6M223.5 117v6" stroke="#444" stroke-width="0.9" fill="none"/><rect x="5" y="134" width="7.5" height="7.5" fill="#e3e2e0"/><path d="M5 141.5h6" stroke="#777" stroke-width="0.9"/><rect x="11" y="140" width="3.5" height="3.5" fill="#3d8a3a"/><rect x="12" y="141" width="1.5" height="1.5" fill="#dfe"/><path d="M22 138a4 4 0 0 1 7-2.5" stroke="#3f7fd0" stroke-width="2" fill="none"/><path d="M30 133.5v3.5h-3.5z" fill="#3f7fd0"/><path d="M29.5 139a4 4 0 0 1-7 2.5" stroke="#3f7fd0" stroke-width="2" fill="none"/><path d="M21.5 143.5v-3.5h3.5z" fill="#3f7fd0"/><rect x="37" y="133.5" width="10" height="2.5" rx="1" fill="#f2d63c" stroke="#6a8fc2" stroke-width="0.6"/><path d="M38 137h8l-3 1.5v5h-2v-5z" fill="#6a8fc2"/><path d="M54.5 134.5v8h4" stroke="#555" stroke-width="0.9" fill="none"/><rect x="55" y="136" width="1.5" height="2" fill="#f0a020"/><rect x="55" y="140" width="1.5" height="2" fill="#f0a020"/><path d="M58 136h6M61 134v9M59 138h4" stroke="#2d4a6a" stroke-width="1.2"/><circle cx="74.5" cy="138" r="4.7" fill="#6891c9"/><path d="M74.5 136v.5M74.3 137.5l.3 3" stroke="#fff" stroke-width="1.1"/><circle cx="16" cy="157.0" r="4.3" fill="#3d74c2"/><path d="M14 156.0l2 1 1.5-1.5 1.5 2-2 2z" fill="#4a9a3a"/><rect x="19" y="152.5" width="2" height="9" fill="#e7eef8" stroke="#555" stroke-width="0.5"/><path d="M18 159.0l3 2" stroke="#e89a20" stroke-width="1.2"/><path d="M3.5 170.02700000000002l3 2.7-3 2.7z" fill="#8a8a8a"/><path d="M17 167.727l1.5 3.3 3.5.5-2.6 2.5.7 3.6-3.1-1.8-3.1 1.8.7-3.6-2.6-2.5 3.5-.5z" fill="#f5d33a" stroke="#e0a800" stroke-width="0.6"/><path d="M3.5 185.75400000000002l3 2.7-3 2.7z" fill="#8a8a8a"/><rect x="12.5" y="183.654" width="9.5" height="10" fill="#e4e3e1" stroke="#b8b6b2" stroke-width="0.8"/><path d="M14.3 183.654v10" stroke="#c9c7c3"/><path d="M17.5 182.954v5l1 -1 1 1v-5z" fill="#4f82c4"/><path d="M3.5 201.481l3 2.7-3 2.7z" fill="#8a8a8a"/><path d="M12.5 200.18099999999998h4l1 1h4.5v8.5h-9.5z" fill="#f4f4f4" stroke="#666" stroke-width="0.9"/><path d="M15 206.18099999999998l2-2 2 2v2h-4z" fill="none" stroke="#333" stroke-width="0.9"/><path d="M3.5 217.20800000000003l3 2.7-3 2.7z" fill="#8a8a8a"/><path d="M12.5 215.90800000000002h4l1 1h4.5v8.5h-9.5z" fill="#efeeec" stroke="#999" stroke-width="0.9"/><path d="M3.5 232.935l3 2.7-3 2.7z" fill="#8a8a8a"/><path d="M12 233.635l5-3 5 3-5 2.5z" fill="#5f8ac4"/><path d="M12 233.635v5l5 2.5v-5z" fill="#e0b413"/><path d="M17 236.135v5l5-2.5v-5z" fill="#f3d34a"/><path d="M3.5 248.662l3 2.7-3 2.7z" fill="#8a8a8a"/><path d="M12.5 256.36199999999997c2-4 5-8 9.5-10-1 3-3 6-7.5 8z" fill="#4f7fc0" stroke="#2f5a92" stroke-width="0.5"/><path d="M3.5 264.389l3 2.7-3 2.7z" fill="#8a8a8a"/><path d="M12.5 263.089c2-2 7-2 9 0 1 2 0 5-2 5l-1 3.5h-2l-.5-3c-2 0-4-.5-4-2.5z" fill="#5b87c2" stroke="#2f5a92" stroke-width="0.6"/><path d="M3.5 280.11600000000004l3 2.7-3 2.7z" fill="#8a8a8a"/><path d="M12.5 278.31600000000003l9.5 3.5-5 3-4 3 1-4z" fill="#5b87c2" stroke="#2f5a92" stroke-width="0.5"/><path d="M3.5 295.843l3 2.7-3 2.7z" fill="#8a8a8a"/><circle cx="17" cy="298.543" r="4.6" fill="#7fa3d3" stroke="#4a78b5" stroke-width="0.9"/><path d="M12.5 298.543h9M17 294.043v9" stroke="#4a78b5" stroke-width="0.7"/><path d="M2.5 312.96999999999997h5l-2.5 2.7z" fill="#8a8a8a"/><rect x="12.5" y="310.27" width="9.5" height="9" rx="0.8" fill="#a9c5ea" stroke="#5a7fb2" stroke-width="1"/><path d="M15.6 310.27v9M18.8 310.27v9M12.5 313.27h9.5M12.5 316.27h9.5" stroke="#5a7fb2" stroke-width="0.9"/><path d="M3.5 610.383l3 2.7-3 2.7z" fill="#8a8a8a"/><g fill="#4f82c4"><rect x="12.5" y="608.5830000000001" width="2.2" height="2"/><rect x="16" y="608.5830000000001" width="2.2" height="2"/><rect x="19.5" y="608.5830000000001" width="2.2" height="2"/><rect x="12.5" y="611.5830000000001" width="2.2" height="6"/><rect x="16" y="611.5830000000001" width="2.2" height="6"/><rect x="19.5" y="611.5830000000001" width="2.2" height="6"/></g><path d="M3.5 626.1099999999999l3 2.7-3 2.7z" fill="#8a8a8a"/><circle cx="17" cy="628.81" r="4.6" fill="#2f5f9f" stroke="#244f88" stroke-width="0.9"/><path d="M12.5 628.81h9M17 624.31v9" stroke="#fff" stroke-width="0.7"/><path d="M3.5 641.837l3 2.7-3 2.7z" fill="#8a8a8a"/><circle cx="17" cy="644.537" r="4.6" fill="#e8eff8" stroke="#4f82c4" stroke-width="0.9"/><path d="M12.5 644.537h9M17 640.037v9" stroke="#4f82c4" stroke-width="0.7"/><path d="M15 642.537l2 3 2-3" stroke="#555" fill="none"/><path d="M3.5 657.564l3 2.7-3 2.7z" fill="#8a8a8a"/><circle cx="17" cy="660.264" r="4.6" fill="#e8eff8" stroke="#4f82c4" stroke-width="0.9"/><path d="M12.5 660.264h9M17 655.764v9" stroke="#4f82c4" stroke-width="0.7"/><circle cx="15" cy="661.764" r="2" fill="#555"/><path d="M3.5 673.2909999999999l3 2.7-3 2.7z" fill="#8a8a8a"/><path d="M17 670.991v10M12.5 673.491l9 5M12.5 678.491l9-5" stroke="#4f7fc0" stroke-width="1.6"/><circle cx="17" cy="675.991" r="1.6" fill="#2c5a98"/><rect x="23.5" y="325.997" width="9.5" height="9" rx="0.8" fill="#a9c5ea" stroke="#5a7fb2" stroke-width="1"/><path d="M26.6 325.997v9M29.8 325.997v9M23.5 328.997h9.5M23.5 331.997h9.5" stroke="#5a7fb2" stroke-width="0.9"/><rect x="23.5" y="341.724" width="9.5" height="9" rx="0.8" fill="#a9c5ea" stroke="#5a7fb2" stroke-width="1"/><path d="M26.6 341.724v9M29.8 341.724v9M23.5 344.724h9.5M23.5 347.724h9.5" stroke="#5a7fb2" stroke-width="0.9"/><rect x="23.5" y="357.451" width="9.5" height="9" rx="0.8" fill="#a9c5ea" stroke="#5a7fb2" stroke-width="1"/><path d="M26.6 357.451v9M29.8 357.451v9M23.5 360.451h9.5M23.5 363.451h9.5" stroke="#5a7fb2" stroke-width="0.9"/><rect x="23.5" y="373.178" width="9.5" height="9" rx="0.8" fill="#a9c5ea" stroke="#5a7fb2" stroke-width="1"/><path d="M26.6 373.178v9M29.8 373.178v9M23.5 376.178h9.5M23.5 379.178h9.5" stroke="#5a7fb2" stroke-width="0.9"/><rect x="23.5" y="388.905" width="9.5" height="9" rx="0.8" fill="#a9c5ea" stroke="#5a7fb2" stroke-width="1"/><path d="M26.6 388.905v9M29.8 388.905v9M23.5 391.905h9.5M23.5 394.905h9.5" stroke="#5a7fb2" stroke-width="0.9"/><rect x="23.5" y="404.632" width="9.5" height="9" rx="0.8" fill="#a9c5ea" stroke="#5a7fb2" stroke-width="1"/><path d="M26.6 404.632v9M29.8 404.632v9M23.5 407.632h9.5M23.5 410.632h9.5" stroke="#5a7fb2" stroke-width="0.9"/><rect x="23.5" y="420.359" width="9.5" height="9" rx="0.8" fill="#a9c5ea" stroke="#5a7fb2" stroke-width="1"/><path d="M26.6 420.359v9M29.8 420.359v9M23.5 423.359h9.5M23.5 426.359h9.5" stroke="#5a7fb2" stroke-width="0.9"/><rect x="23.5" y="436.086" width="9.5" height="9" rx="0.8" fill="#a9c5ea" stroke="#5a7fb2" stroke-width="1"/><path d="M26.6 436.086v9M29.8 436.086v9M23.5 439.086h9.5M23.5 442.086h9.5" stroke="#5a7fb2" stroke-width="0.9"/><rect x="23.5" y="451.813" width="9.5" height="9" rx="0.8" fill="#a9c5ea" stroke="#5a7fb2" stroke-width="1"/><path d="M26.6 451.813v9M29.8 451.813v9M23.5 454.813h9.5M23.5 457.813h9.5" stroke="#5a7fb2" stroke-width="0.9"/><rect x="23.5" y="467.54" width="9.5" height="9" rx="0.8" fill="#a9c5ea" stroke="#5a7fb2" stroke-width="1"/><path d="M26.6 467.54v9M29.8 467.54v9M23.5 470.54h9.5M23.5 473.54h9.5" stroke="#5a7fb2" stroke-width="0.9"/><rect x="23.5" y="483.267" width="9.5" height="9" rx="0.8" fill="#a9c5ea" stroke="#5a7fb2" stroke-width="1"/><path d="M26.6 483.267v9M29.8 483.267v9M23.5 486.267h9.5M23.5 489.267h9.5" stroke="#5a7fb2" stroke-width="0.9"/><rect x="23.5" y="498.994" width="9.5" height="9" rx="0.8" fill="#a9c5ea" stroke="#5a7fb2" stroke-width="1"/><path d="M26.6 498.994v9M29.8 498.994v9M23.5 501.994h9.5M23.5 504.994h9.5" stroke="#5a7fb2" stroke-width="0.9"/><rect x="23.5" y="514.721" width="9.5" height="9" rx="0.8" fill="#a9c5ea" stroke="#5a7fb2" stroke-width="1"/><path d="M26.6 514.721v9M29.8 514.721v9M23.5 517.721h9.5M23.5 520.721h9.5" stroke="#5a7fb2" stroke-width="0.9"/><rect x="23.5" y="530.448" width="9.5" height="9" rx="0.8" fill="#a9c5ea" stroke="#5a7fb2" stroke-width="1"/><path d="M26.6 530.448v9M29.8 530.448v9M23.5 533.448h9.5M23.5 536.448h9.5" stroke="#5a7fb2" stroke-width="0.9"/><rect x="23.5" y="546.175" width="9.5" height="9" rx="0.8" fill="#a9c5ea" stroke="#5a7fb2" stroke-width="1"/><path d="M26.6 546.175v9M29.8 546.175v9M23.5 549.175h9.5M23.5 552.175h9.5" stroke="#5a7fb2" stroke-width="0.9"/><rect x="23.5" y="561.902" width="9.5" height="9" rx="0.8" fill="#a9c5ea" stroke="#5a7fb2" stroke-width="1"/><path d="M26.6 561.902v9M29.8 561.902v9M23.5 564.902h9.5M23.5 567.902h9.5" stroke="#5a7fb2" stroke-width="0.9"/><rect x="23.5" y="577.629" width="9.5" height="9" rx="0.8" fill="#a9c5ea" stroke="#5a7fb2" stroke-width="1"/><path d="M26.6 577.629v9M29.8 577.629v9M23.5 580.629h9.5M23.5 583.629h9.5" stroke="#5a7fb2" stroke-width="0.9"/><rect x="23.5" y="593.356" width="9.5" height="9" rx="0.8" fill="#a9c5ea" stroke="#5a7fb2" stroke-width="1"/><path d="M26.6 593.356v9M29.8 593.356v9M23.5 596.356h9.5M23.5 599.356h9.5" stroke="#5a7fb2" stroke-width="0.9"/><path d="M3 751l3-2.5v5z" fill="#8a8a8a"/><path d="M8.5 746v9" stroke="#d0cecb"/><rect x="182.5" y="746" width="34" height="9" fill="#e6e5e3" stroke="#cdcbc8" stroke-width="0.8"/><path d="M219 748.5l3 2.5-3 2.5z" fill="#8a8a8a"/><path d="M569 788.5h4.5l-2.25 2.475z" fill="#7a7a7a"/><circle cx="10.5" cy="789" r="3" fill="none" stroke="#8a8a8a" stroke-width="1"/><path d="M12.5 791l2.5 2.5" stroke="#8a8a8a" stroke-width="1.2"/><path d="M466 786l8 7M474 786l-8 7" stroke="#3a3a3a" stroke-width="1"/><circle cx="470" cy="789.5" r="2.5" fill="none" stroke="#3a3a3a" stroke-width="1"/><rect x="589" y="789" width="7" height="5.5" rx="0.8" fill="#555"/><path d="M590.5 789v-1.5a2 2 0 0 1 4 0v1.5" stroke="#555" stroke-width="1.2" fill="none"/><path d="M702 786.5l1.8-2 1.8 2M702 791.5l1.8 2 1.8-2" stroke="#8a8a8a" stroke-width="0.8" fill="none"/><path d="M816 786.5l1.8-2 1.8 2M816 791.5l1.8 2 1.8-2" stroke="#8a8a8a" stroke-width="0.8" fill="none"/><rect x="826.5" y="786" width="8" height="8" fill="#fff" stroke="#9a9a9a" stroke-width="0.9"/><path d="M828 790l1.8 2.3 3.2-5" stroke="#333" stroke-width="1.1" fill="none"/><circle cx="886.5" cy="790" r="4" fill="#bdbdbd" stroke="#666" stroke-width="0.8"/><path d="M882.5 790h8M886.5 786v8" stroke="#666" stroke-width="0.7"/><path d="M959.5 786.5h9.5v6.5h-4l-2.5 2.5v-2.5h-3z" fill="#444" stroke="#444" stroke-linejoin="round" stroke-width="1.2"/><g fill="#fff"><rect x="961.5" y="789" width="1.4" height="1.4"/><rect x="963.8" y="789" width="1.4" height="1.4"/><rect x="966.1" y="789" width="1.4" height="1.4"/></g><path d="M430 377h2v-2h2v-1.2h1.5v1.2h2.5v1h1.8v6.8h-9.8z" fill="#0a0a0a"/><rect x="433" y="379.5" width="4" height="1.3" fill="#6a6a6a"/><rect x="431.5" y="384" width="7.5" height="0.9" fill="#6a6a6a"/><rect x="227" y="441" width="1" height="1" fill="#9a9a9a"/><rect x="227" y="443" width="1" height="1" fill="#9a9a9a"/><rect x="227" y="445" width="1" height="1" fill="#9a9a9a"/><rect x="227" y="447" width="1" height="1" fill="#9a9a9a"/></svg>
<div class="t" style="left:233px;top:94.5px;font-size:10px;letter-spacing:.6px;color:#a0a0a0">12</div>
<div class="t" style="left:302.5px;top:94px;font-size:10px;letter-spacing:.5px;color:#808080">px</div>
</body></html>
